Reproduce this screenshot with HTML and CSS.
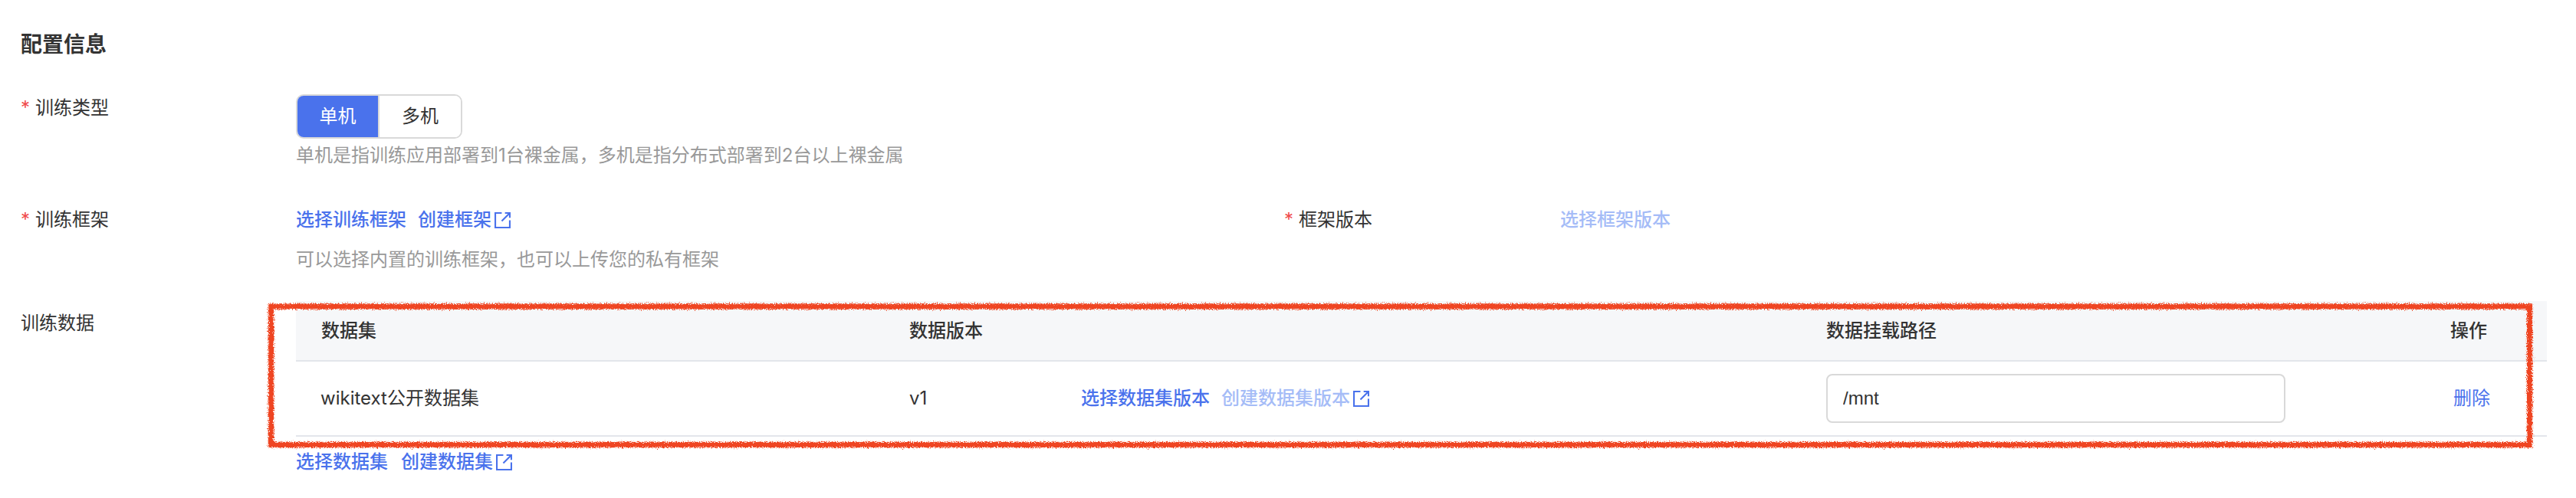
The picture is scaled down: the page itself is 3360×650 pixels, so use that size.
FILE: index.html
```html
<!DOCTYPE html>
<html lang="en">
<head>
    <meta charset="UTF-8">
    <title>配置信息</title>
    <link rel="stylesheet" href="styles.css">
</head>
<body>
    <div class="config-page">
        <h2 class="section-title">配置信息</h2>

        <div class="form-row row-type">
            <div class="form-label"><span class="required">*</span>训练类型</div>
            <div class="form-body">
                <div class="segment">
                    <div class="segment-item active">单机</div>
                    <div class="segment-item">多机</div>
                </div>
                <div class="hint hint-type">单机是指训练应用部署到1台裸金属，多机是指分布式部署到2台以上裸金属</div>
            </div>
        </div>

        <div class="form-row row-framework">
            <div class="form-label"><span class="required">*</span>训练框架</div>
            <div class="form-body body-framework">
                <div class="links">
                    <a class="link">选择训练框架</a>
                    <a class="link">创建框架<svg class="ext-icon" viewBox="0 0 20 20"><path d="M9 1H1v18h18v-9M9 11L19 1M13 1h6v6"/></svg></a>
                </div>
                <div class="hint hint-framework">可以选择内置的训练框架，也可以上传您的私有框架</div>
            </div>
            <div class="form-label label-version"><span class="required">*</span>框架版本</div>
            <div class="form-body">
                <a class="link disabled">选择框架版本</a>
            </div>
        </div>

        <div class="form-row row-data">
            <div class="form-label label-data">训练数据</div>
            <div class="form-body body-data">
                <div class="data-table">
                    <div class="table-row table-head">
                        <div>数据集</div>
                        <div>数据版本</div>
                        <div>数据挂载路径</div>
                        <div>操作</div>
                    </div>
                    <div class="table-row table-item">
                        <div class="dataset-name">wikitext公开数据集</div>
                        <div class="version-cell">
                            <span class="version-name">v1</span>
                            <div class="links">
                                <a class="link">选择数据集版本</a>
                                <a class="link"><span class="disabled">创建数据集版本</span><svg class="ext-icon" viewBox="0 0 20 20"><path d="M9 1H1v18h18v-9M9 11L19 1M13 1h6v6"/></svg></a>
                            </div>
                        </div>
                        <div><input class="path-input" type="text" value="/mnt"></div>
                        <div><a class="link plain">删除</a></div>
                    </div>
                </div>
                <div class="links links-data">
                    <a class="link">选择数据集</a>
                    <a class="link">创建数据集<svg class="ext-icon" viewBox="0 0 20 20"><path d="M9 1H1v18h18v-9M9 11L19 1M13 1h6v6"/></svg></a>
                </div>
            </div>
        </div>
    </div>

    <svg class="annotation" width="2980" height="210">
        <filter id="rough" x="-1%" y="-10%" width="102%" height="120%">
            <feTurbulence type="fractalNoise" baseFrequency="0.8" numOctaves="2" seed="3"/>
            <feDisplacementMap in="SourceGraphic" scale="7"/>
        </filter>
        <rect x="13.5" y="14" width="2946" height="180.5" fill="none" stroke="#ef4522" stroke-width="7.5" filter="url(#rough)"/>
    </svg>
</body>
</html>
```

FILE: styles.css
```css
body {
    margin: 0;
    position: relative;
    height: 650px;
    overflow: hidden;
    background-color: #fff;
    color: #333;
    font-family: Inter, "Noto Sans CJK SC", sans-serif;
    font-size: 24px;
    line-height: 36px;
}
.config-page {
    padding: 38px 38px 0 27px;
}
.section-title {
    margin: 0 0 45px;
    font-size: 28px;
    line-height: 40px;
    font-weight: 700;
    color: #333;
}
.form-row {
    display: flex;
    align-items: flex-start;
}
.row-framework {
    margin-top: 48px;
}
.row-data {
    margin-top: 36px;
}
.form-label {
    flex: 0 0 359px;
    white-space: nowrap;
}
.required {
    display: inline-block;
    width: 19px;
    color: #f04b4b;
}
.body-framework {
    flex: 0 0 1289px;
}
.body-data {
    flex: 1;
}
.label-data {
    padding-top: 11px;
}
.label-version {
    flex-basis: 360px;
}
.segment {
    display: inline-flex;
    height: 58px;
    box-sizing: border-box;
    border: 2px solid #d9d9d9;
    border-radius: 10px;
    overflow: hidden;
}
.segment-item {
    width: 106px;
    line-height: 54px;
    text-align: center;
    background-color: #fff;
    color: #333;
}
.segment-item.active {
    width: 105px;
    border-right: 2px solid #d9d9d9;
    background-color: #4a72ec;
    color: #fff;
}
.hint {
    color: #999;
}
.hint-type {
    margin-top: 4px;
}
.hint-framework {
    margin-top: 16px;
}
.links {
    display: flex;
    gap: 15px;
}
.link {
    display: inline-flex;
    align-items: center;
    color: #4a72ec;
    font-weight: 500;
    white-space: nowrap;
}
.link.plain {
    font-weight: 400;
    padding-left: 4px;
}
.link.disabled,
.disabled {
    color: #a5bcf7;
}
.ext-icon {
    width: 21px;
    height: 21px;
    margin-left: 4px;
    fill: none;
    stroke: #4a72ec;
    stroke-width: 2;
}
.table-row {
    display: grid;
    grid-template-columns: 767px 1196px 814px 1fr;
    padding-left: 33px;
    border-bottom: 2px solid #e3e6eb;
    box-sizing: border-box;
}
.table-head {
    height: 79px;
    padding-top: 21px;
    background-color: #f6f7f9;
    font-weight: 500;
}
.table-item {
    height: 98px;
    align-items: center;
}
.dataset-name {
    margin-left: -1px;
}
.version-cell {
    display: flex;
}
.version-name {
    width: 224px;
}
.path-input {
    display: block;
    width: 599px;
    height: 64px;
    box-sizing: border-box;
    padding: 0 20px;
    border: 2px solid #d9d9d9;
    border-radius: 8px;
    outline: none;
    color: #333;
    font-family: "Liberation Sans", sans-serif;
    font-size: 24px;
}
.links-data {
    margin-top: 15px;
    gap: 17px;
}
.annotation {
    position: absolute;
    left: 340px;
    top: 386px;
}
```
